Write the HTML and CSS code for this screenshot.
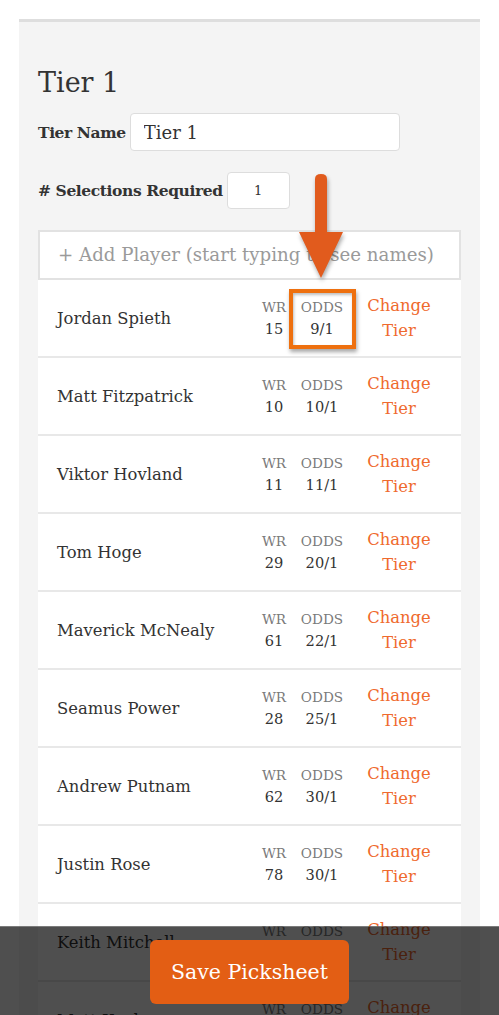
FILE: index.html
```html
<!DOCTYPE html>
<html lang="en">
<head>
  <meta charset="UTF-8" />
  <meta name="viewport" content="width=device-width, initial-scale=1.0" />
  <title>Picksheet - Tier 1</title>
  <link rel="stylesheet" href="styles.css">
</head>
<body>

  <div class="tier-panel">
    <h2 class="tier-title">Tier 1</h2>

    <div class="field-row">
      <label class="field-label" for="tierName">Tier Name</label>
      <input class="field-input name-input" type="text" id="tierName" value="Tier 1" />
    </div>

    <div class="field-row">
      <label class="field-label" for="selections"># Selections Required</label>
      <input class="field-input count-input" type="text" id="selections" value="1" />
    </div>

    <!-- seta de destaque -->
    <div class="callout-arrow">
      <svg width="50" height="112" viewBox="0 0 50 112">
        <path d="M17 7 Q17 2 23 2 Q29 2 29 7 L29 60 L45 60 L23 106 L1 60 L17 60 Z" fill="#e15b1d"/>
      </svg>
    </div>

    <div class="add-player">+ Add Player (start typing to see names)</div>

    <div class="player-list">
      <div class="player">
        <div class="player-name">Jordan Spieth</div>
        <div class="stat wr"><span class="stat-label">WR</span><span class="stat-value">15</span></div>
        <div class="stat odds highlight"><span class="stat-label">ODDS</span><span class="stat-value">9/1</span></div>
        <a class="change-tier" href="#">Change Tier</a>
      </div>
      <div class="player">
        <div class="player-name">Matt Fitzpatrick</div>
        <div class="stat wr"><span class="stat-label">WR</span><span class="stat-value">10</span></div>
        <div class="stat odds"><span class="stat-label">ODDS</span><span class="stat-value">10/1</span></div>
        <a class="change-tier" href="#">Change Tier</a>
      </div>
      <div class="player">
        <div class="player-name">Viktor Hovland</div>
        <div class="stat wr"><span class="stat-label">WR</span><span class="stat-value">11</span></div>
        <div class="stat odds"><span class="stat-label">ODDS</span><span class="stat-value">11/1</span></div>
        <a class="change-tier" href="#">Change Tier</a>
      </div>
      <div class="player">
        <div class="player-name">Tom Hoge</div>
        <div class="stat wr"><span class="stat-label">WR</span><span class="stat-value">29</span></div>
        <div class="stat odds"><span class="stat-label">ODDS</span><span class="stat-value">20/1</span></div>
        <a class="change-tier" href="#">Change Tier</a>
      </div>
      <div class="player">
        <div class="player-name">Maverick McNealy</div>
        <div class="stat wr"><span class="stat-label">WR</span><span class="stat-value">61</span></div>
        <div class="stat odds"><span class="stat-label">ODDS</span><span class="stat-value">22/1</span></div>
        <a class="change-tier" href="#">Change Tier</a>
      </div>
      <div class="player">
        <div class="player-name">Seamus Power</div>
        <div class="stat wr"><span class="stat-label">WR</span><span class="stat-value">28</span></div>
        <div class="stat odds"><span class="stat-label">ODDS</span><span class="stat-value">25/1</span></div>
        <a class="change-tier" href="#">Change Tier</a>
      </div>
      <div class="player">
        <div class="player-name">Andrew Putnam</div>
        <div class="stat wr"><span class="stat-label">WR</span><span class="stat-value">62</span></div>
        <div class="stat odds"><span class="stat-label">ODDS</span><span class="stat-value">30/1</span></div>
        <a class="change-tier" href="#">Change Tier</a>
      </div>
      <div class="player">
        <div class="player-name">Justin Rose</div>
        <div class="stat wr"><span class="stat-label">WR</span><span class="stat-value">78</span></div>
        <div class="stat odds"><span class="stat-label">ODDS</span><span class="stat-value">30/1</span></div>
        <a class="change-tier" href="#">Change Tier</a>
      </div>
      <div class="player">
        <div class="player-name">Keith Mitchell</div>
        <div class="stat wr"><span class="stat-label">WR</span><span class="stat-value">45</span></div>
        <div class="stat odds"><span class="stat-label">ODDS</span><span class="stat-value">35/1</span></div>
        <a class="change-tier" href="#">Change Tier</a>
      </div>
      <div class="player">
        <div class="player-name">Matt Kuchar</div>
        <div class="stat wr"><span class="stat-label">WR</span><span class="stat-value">52</span></div>
        <div class="stat odds"><span class="stat-label">ODDS</span><span class="stat-value">40/1</span></div>
        <a class="change-tier" href="#">Change Tier</a>
      </div>
    </div>
  </div>

  <div class="save-bar">
    <button class="save-btn">Save Picksheet</button>
  </div>

</body>
</html>
```

FILE: styles.css
```css
/* Estilos gerais */
body {
  font-family: "DejaVu Serif", "Liberation Serif", serif;
  background-color: #fff;
  color: #333;
  margin: 0;
  padding: 0;
  overflow-x: hidden;
}

/* Painel do tier */
.tier-panel {
  position: relative;
  background: #f4f4f4;
  border-top: 3px solid #dedede;
  margin: 19px 19px 0;
  padding: 0 19px 40px;
}

.tier-title {
  font-size: 27px;
  font-weight: normal;
  margin: 0;
  padding: 44px 0 13px;
  line-height: 34px;
}

.field-row {
  display: flex;
  align-items: center;
  gap: 4px;
  margin-bottom: 21px;
}

.field-label {
  font-size: 15.5px;
  font-weight: bold;
  letter-spacing: -0.4px;
}

.field-input {
  background: #fff;
  border: 1px solid #ddd;
  border-radius: 4px;
  font-family: inherit;
  color: #333;
  box-sizing: border-box;
  outline: none;
}

.name-input {
  width: 270px;
  height: 38px;
  padding: 0 13px;
  font-size: 18px;
}

.count-input {
  width: 63px;
  height: 37px;
  text-align: center;
  font-size: 13px;
}

/* Seta de destaque */
.callout-arrow {
  position: absolute;
  left: 279px;
  top: 150px;
  z-index: 2;
  filter: drop-shadow(1px 3px 2px rgba(0,0,0,0.35));
}

.callout-arrow svg {
  display: block;
}

/* Campo de adicionar jogador */
.add-player {
  background: #fff;
  border: 2px solid #e2e2e2;
  height: 46px;
  line-height: 46px;
  padding-left: 18px;
  font-size: 18.2px;
  color: #9a9a9a;
  white-space: nowrap;
  overflow: hidden;
}

/* Lista de jogadores */
.player {
  display: flex;
  align-items: center;
  background: #fff;
  height: 76px;
  border-bottom: 2px solid #e8e8e8;
  padding-left: 19px;
}

.player-name {
  flex: 1;
  font-size: 16.4px;
  color: #333;
}

.stat {
  display: flex;
  flex-direction: column;
  align-items: center;
  line-height: 22px;
  position: relative;
}

.stat.wr {
  width: 38px;
}

.stat.odds {
  width: 58px;
}

.stat-label {
  font-size: 13.6px;
  color: #7a7a7a;
}

.stat-value {
  font-size: 14.6px;
  color: #333;
}

.highlight::after {
  content: "";
  position: absolute;
  left: -4px;
  right: -5px;
  top: -7px;
  bottom: -9px;
  border: 4px solid #ee700f;
  box-shadow: 1px 3px 4px rgba(0,0,0,0.35), inset 1px 2px 3px rgba(0,0,0,0.25);
}

.change-tier {
  width: 76px;
  margin-left: 10px;
  margin-right: 24px;
  text-align: center;
  font-size: 16.4px;
  line-height: 25px;
  color: #ef6a2e;
  text-decoration: none;
}

/* Barra inferior */
.save-bar {
  position: fixed;
  left: 0;
  right: 0;
  bottom: 0;
  height: 89px;
  background: rgba(0,0,0,0.69);
  border-top: 1px solid rgba(255,255,255,0.25);
  display: flex;
  justify-content: center;
  padding-top: 13px;
  box-sizing: border-box;
  z-index: 5;
}

.save-btn {
  width: 199px;
  height: 64px;
  background-color: #e35e14;
  color: #fff;
  border: none;
  border-radius: 6px;
  font-family: inherit;
  font-size: 20.5px;
  cursor: pointer;
}
```
